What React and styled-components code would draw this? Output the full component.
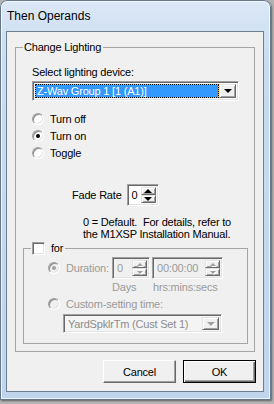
import styled, { createGlobalStyle } from "styled-components";

const GlobalStyle = createGlobalStyle`
  html, body { margin: 0; padding: 0; }
  body {
    width: 274px;
    height: 404px;
    overflow: hidden;
    background: #b4b4b4;
    font-family: "Liberation Sans", Arial, sans-serif;
    font-size: 11px;
    letter-spacing: -0.2px;
    color: #000;
  }
  * { box-sizing: border-box; }
`;

const Frame = styled.div`
  width: 271px;
  height: 400px;
  display: flex;
  flex-direction: column;
  padding: 0 7px 8px 6px;
  border-radius: 7px 7px 0 0;
  background: linear-gradient(to bottom, #dce8f6, #c9dcf1 60px, #bfd5ee);
  box-shadow: inset 0 0 0 1px #66788c, inset 0 0 0 2px rgba(255, 255, 255, 0.7),
    1px 1px 2px rgba(0, 0, 0, 0.45);
`;

const TitleBar = styled.div`
  height: 31px;
  display: flex;
  align-items: center;
  padding-left: 1px;
  font-size: 12px;
  letter-spacing: 0;
`;

const Client = styled.div`
  flex: 1;
  display: flex;
  flex-direction: column;
  border: 1px solid #6f7f92;
  background: #f0f0f0;
  padding: 9px 7px 8px 8px;
`;

const Group = styled.fieldset`
  margin: ${p => p.$top || 0}px 0 0 0;
  width: ${p => p.$w}px;
  min-width: 0;
  padding: 0 0 ${p => p.$bottom}px ${p => p.$left}px;
  border: 1px solid #a5a5a5;
  display: flex;
  flex-direction: column;
  align-items: flex-start;
`;

const Caption = styled.legend`
  padding: 0 2px 0 1px;
  line-height: 13px;
  height: 13px;
  display: flex;
  align-items: center;
  gap: 6px;
  color: #000;
`;

const Label = styled.div`
  line-height: ${p => p.$lh || 13}px;
  margin: ${p => p.$top || 0}px 0 0 ${p => p.$left || 0}px;
  color: ${p => (p.$disabled ? "#9a9a9a" : "#000")};
  white-space: nowrap;
  width: ${p => (p.$w ? `${p.$w}px` : "auto")};
  flex: none;
`;

const Sunken = styled.div`
  display: flex;
  border: 1px solid;
  border-color: #a0a0a0 #fff #fff #a0a0a0;
  box-shadow: inset 1px 1px #696969, inset -1px -1px #e3e3e3;
  padding: 2px;
`;

const Combo = styled(Sunken)`
  width: ${p => p.$w}px;
  height: ${p => p.$h}px;
  margin: ${p => p.$top}px 0 0 ${p => p.$left}px;
  background: ${p => (p.$disabled ? "#f4f4f4" : "#fff")};
`;

const ComboValue = styled.div`
  flex: 1;
  display: flex;
  align-items: center;
  padding-left: 2px;
  color: ${p => (p.$disabled ? "#8c8c8c" : "#000")};
`;

const Selected = styled.div`
  flex: 1;
  display: flex;
  align-items: center;
  padding-left: 1px;
  color: #fff;
  border: 1px dotted #000;
  background: linear-gradient(#3399ff, #3399ff) padding-box, #e9a93c border-box;
`;

const RaisedBtn = styled.div`
  flex: none;
  display: flex;
  align-items: center;
  justify-content: center;
  background: #f0f0f0;
  border: 1px solid;
  border-color: #e3e3e3 #696969 #696969 #e3e3e3;
  box-shadow: inset 1px 1px #fff, inset -1px -1px #a0a0a0;
`;

const DropBtn = styled(RaisedBtn)`
  width: 17px;
`;

const Arrow = styled.span`
  width: 0;
  height: 0;
  border-left: ${p => p.$size}px solid transparent;
  border-right: ${p => p.$size}px solid transparent;
  ${p => (p.$up ? "border-bottom" : "border-top")}: ${p => p.$size}px solid
    ${p => (p.$disabled ? "#a0a0a0" : "#000")};
  filter: ${p => (p.$disabled ? "drop-shadow(1px 1px 0 #fff)" : "none")};
`;

const RadioList = styled.div`
  display: flex;
  flex-direction: column;
  margin: 9px 0 0 9px;
`;

const OptionRow = styled.div`
  height: ${p => p.$h || 17}px;
  display: flex;
  align-items: center;
  gap: 6px;
  margin: ${p => p.$top || 0}px 0 0 ${p => p.$left || 0}px;
  color: ${p => (p.$disabled ? "#9a9a9a" : "#000")};
`;

const RadioMark = styled.span`
  flex: none;
  width: 12px;
  height: 12px;
  border-radius: 50%;
  display: flex;
  align-items: center;
  justify-content: center;
  background: ${p => (p.$disabled ? "#f0f0f0" : "#fff")};
  border: 1px solid;
  border-color: #a0a0a0 #fff #fff #a0a0a0;
  box-shadow: inset 1px 1px #8a8a8a, inset -1px -1px #e3e3e3;
  &::after {
    content: "";
    display: ${p => (p.$checked ? "block" : "none")};
    width: 4px;
    height: 4px;
    border-radius: 50%;
    background: ${p => (p.$disabled ? "#a0a0a0" : "#000")};
  }
`;

const CheckMark = styled.span`
  flex: none;
  width: 13px;
  height: 13px;
  background: #fff;
  border: 1px solid;
  border-color: #a0a0a0 #fff #fff #a0a0a0;
  box-shadow: inset 1px 1px #696969, inset -1px -1px #e3e3e3;
`;

const Row = styled.div`
  display: flex;
  align-items: center;
  gap: ${p => p.$gap || 0}px;
  margin: ${p => p.$top || 0}px 0 0 ${p => p.$left || 0}px;
`;

const Spin = styled(Sunken)`
  width: ${p => p.$w}px;
  height: 22px;
  background: ${p => (p.$disabled ? "#f0f0f0" : "#fff")};
`;

const SpinValue = styled.div`
  flex: 1;
  display: flex;
  align-items: center;
  padding-left: 2px;
  color: ${p => (p.$disabled ? "#9a9a9a" : "#000")};
`;

const SpinButtons = styled.div`
  width: 15px;
  display: flex;
  flex-direction: column;
`;

const SpinBtn = styled(RaisedBtn)`
  flex: 1;
`;

const Help = styled.div`
  margin: 10px 0 0 60px;
  line-height: 12px;
`;

const ButtonRow = styled.div`
  margin-top: auto;
  display: flex;
  justify-content: flex-end;
  gap: 7px;
`;

const Button = styled.div`
  width: 73px;
  height: 23px;
  display: flex;
  align-items: center;
  justify-content: center;
  background: #f0f0f0;
  border: 1px solid;
  border-color: ${p => (p.$default ? "#000" : "#fff #696969 #696969 #fff")};
  box-shadow: ${p =>
    p.$default
      ? "inset 1px 1px #fff, inset -1px -1px #696969, inset -2px -2px #a0a0a0"
      : "inset -1px -1px #a0a0a0"};
`;

const Radio = ({ checked, disabled, children, ...rest }) => (
  <OptionRow $disabled={disabled} {...rest}>
    <RadioMark $checked={checked} $disabled={disabled} />
    {children}
  </OptionRow>
);

const SpinBox = ({ value, width, disabled }) => (
  <Spin $w={width} $disabled={disabled}>
    <SpinValue $disabled={disabled}>{value}</SpinValue>
    <SpinButtons>
      <SpinBtn>
        <Arrow $up $size={disabled ? 3 : 4} $disabled={disabled} />
      </SpinBtn>
      <SpinBtn>
        <Arrow $size={disabled ? 3 : 4} $disabled={disabled} />
      </SpinBtn>
    </SpinButtons>
  </Spin>
);

export default function App() {
  return (
    <>
      <GlobalStyle />
      <Frame>
        <TitleBar>Then Operands</TitleBar>
        <Client>
          <Group $w={240} $left={7} $bottom={7}>
            <Caption>Change Lighting</Caption>
            <Label $top={12} $left={9}>Select lighting device:</Label>
            <Combo $w={207} $h={20} $top={2} $left={9}>
              <Selected>Z-Wav Group 1 [1 (A1)]</Selected>
              <DropBtn>
                <Arrow $size={4} />
              </DropBtn>
            </Combo>

            <RadioList>
              <Radio>Turn off</Radio>
              <Radio checked>Turn on</Radio>
              <Radio>Toggle</Radio>
            </RadioList>

            <Row $top={23} $left={49} $gap={5}>
              <Label>Fade Rate</Label>
              <SpinBox value="0" width={32} />
            </Row>

            <Help>
              0 = Default.&nbsp; For details, refer to
              <br />
              the M1XSP Installation Manual.
            </Help>

            <Group $w={225} $top={2} $left={7} $bottom={10}>
              <Caption>
                <CheckMark />
                for
              </Caption>
              <Row $top={2}>
                <Radio checked disabled $left={17} $h={22}>
                  <Label $w={46} $disabled>Duration:</Label>
                </Radio>
                <SpinBox value="0" width={38} disabled />
                <Row $left={2}>
                  <SpinBox value="00:00:00" width={71} disabled />
                </Row>
              </Row>
              <Row $top={2} $left={81}>
                <Label $w={41} $disabled>Days</Label>
                <Label $disabled>hrs:mins:secs</Label>
              </Row>
              <Radio disabled $top={3} $left={17} $h={13}>
                Custom-setting time:
              </Radio>
              <Combo $w={159} $h={19} $top={4} $left={32} $disabled>
                <ComboValue $disabled>YardSpklrTm (Cust Set 1)</ComboValue>
                <DropBtn>
                  <Arrow $size={4} $disabled />
                </DropBtn>
              </Combo>
            </Group>
          </Group>

          <ButtonRow>
            <Button>Cancel</Button>
            <Button $default>OK</Button>
          </ButtonRow>
        </Client>
      </Frame>
    </>
  );
}
